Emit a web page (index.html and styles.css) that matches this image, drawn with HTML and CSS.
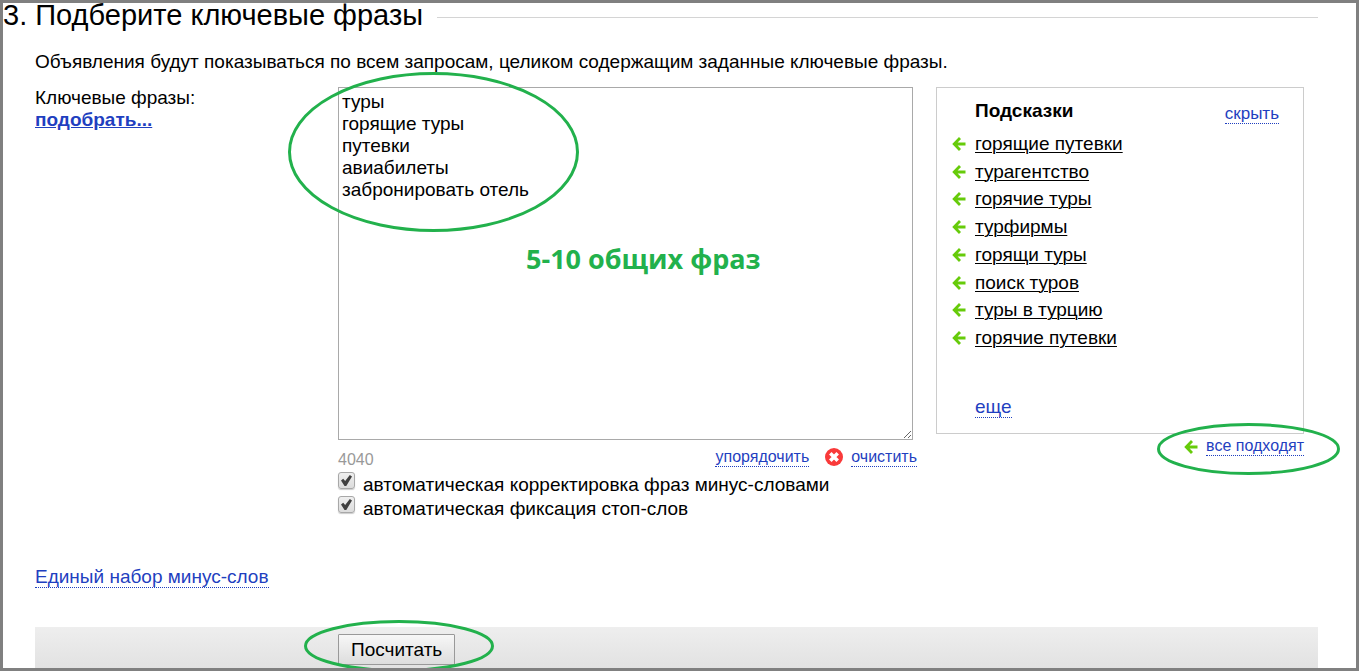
FILE: index.html
```
<!DOCTYPE html>
<html lang="ru">
<head>
<meta charset="utf-8">
<title>Подберите ключевые фразы</title>
<link rel="stylesheet" href="styles.css">
</head>
<body>
<svg class="symbols" aria-hidden="true">
  <symbol id="arrow" viewBox="0 0 14 14">
    <path d="M8 1 2.200 7 8 13M2.500 7H13.500" fill="none" stroke="#66cb0a" stroke-width="2.800"/>
  </symbol>
</svg>
<main class="page">
  <header class="heading">
    <h1 class="title">3. Подберите ключевые фразы</h1>
    <span class="rule"></span>
  </header>
  <div class="content">
    <p class="intro">Объявления будут показываться по всем запросам, целиком содержащим заданные ключевые фразы.</p>
    <div class="form">
      <div class="labels">
        <label for="phrases">Ключевые фразы:</label>
        <a class="pick" href="#">подобрать...</a>
      </div>
      <div class="editor">
        <div class="field">
          <textarea class="phrases" id="phrases" spellcheck="false">туры
горящие туры
путевки
авиабилеты
забронировать отель</textarea>
          <svg class="mark mark-phrases" viewBox="0 0 291 160" aria-hidden="true"><ellipse cx="145.500" cy="80" rx="144" ry="78.500"/></svg>
          <p class="note">5-10 общих фраз</p>
        </div>
        <div class="tools">
          <span class="counter">4040</span>
          <a class="action" href="#">упорядочить</a>
          <svg class="clear-icon" viewBox="0 0 18 18" aria-hidden="true"><circle cx="9" cy="9" r="9" fill="#f93a3a"/><path d="m5.300 5.300 7.400 7.400m0-7.400-7.400 7.400" stroke="#fff" stroke-width="3.600"/></svg>
          <a class="action" href="#">очистить</a>
        </div>
        <label class="option"><input class="check" type="checkbox" checked>автоматическая корректировка фраз минус-словами</label>
        <label class="option"><input class="check" type="checkbox" checked>автоматическая фиксация стоп-слов</label>
      </div>
      <aside class="side">
        <section class="hints">
          <div class="hints-head">
            <h2 class="hints-title">Подсказки</h2>
            <a class="action action-hide" href="#">скрыть</a>
          </div>
          <ul class="list">
            <li class="item"><svg class="arrow"><use href="#arrow"/></svg><a class="hint" href="#">горящие путевки</a></li>
            <li class="item"><svg class="arrow"><use href="#arrow"/></svg><a class="hint" href="#">турагентство</a></li>
            <li class="item"><svg class="arrow"><use href="#arrow"/></svg><a class="hint" href="#">горячие туры</a></li>
            <li class="item"><svg class="arrow"><use href="#arrow"/></svg><a class="hint" href="#">турфирмы</a></li>
            <li class="item"><svg class="arrow"><use href="#arrow"/></svg><a class="hint" href="#">горящи туры</a></li>
            <li class="item"><svg class="arrow"><use href="#arrow"/></svg><a class="hint" href="#">поиск туров</a></li>
            <li class="item"><svg class="arrow"><use href="#arrow"/></svg><a class="hint" href="#">туры в турцию</a></li>
            <li class="item"><svg class="arrow"><use href="#arrow"/></svg><a class="hint" href="#">горячие путевки</a></li>
          </ul>
          <a class="action action-large more" href="#">еще</a>
        </section>
        <div class="accept">
          <svg class="arrow"><use href="#arrow"/></svg>
          <a class="action" href="#">все подходят</a>
          <svg class="mark mark-accept" viewBox="0 0 183 52" aria-hidden="true"><ellipse cx="91.500" cy="26" rx="90" ry="24.500"/></svg>
        </div>
      </aside>
    </div>
    <a class="action action-large minus" href="#">Единый набор минус-слов</a>
    <footer class="bar">
      <div class="submit">
        <button class="button" type="button">Посчитать</button>
        <svg class="mark mark-submit" viewBox="0 0 190 52" aria-hidden="true"><ellipse cx="95" cy="26" rx="93.500" ry="24.500"/></svg>
      </div>
    </footer>
  </div>
</main>
</body>
</html>
```
FILE: styles.css
```
* { box-sizing: border-box; }
body {
  margin: 0;
  background: #fff;
  color: #000;
  font: 19px/22px "Liberation Sans", Arial, sans-serif;
}
h1, h2, p, ul { margin: 0; padding: 0; }
.symbols { position: absolute; width: 0; height: 0; }
.page {
  min-height: 100vh;
  border: 3px solid #808080;
  overflow: hidden;
}
.heading {
  display: flex;
  align-items: center;
  gap: 14px;
  height: 28px;
  padding-right: 38px;
}
.title {
  padding-bottom: 4px;
  font-size: 29px;
  font-weight: 400;
  line-height: 24px;
  white-space: nowrap;
}
.rule { flex: 1; height: 1px; background: #d4d4d4; }
.content { padding: 20px 38px 0 32px; }
.form {
  display: grid;
  grid-template-columns: 303px 1fr 368px;
  padding: 14px 14px 0 0;
}
.labels { display: flex; flex-direction: column; align-items: flex-start; }
.pick { font-weight: 700; color: #1f3fc0; }
.editor { margin-right: 23px; }
.field { position: relative; display: flex; }
.phrases {
  width: 100%;
  height: 353px;
  padding: 3px;
  border: 1px solid #a9a9a9;
  border-radius: 0;
  outline: 0;
  font: inherit;
  color: inherit;
}
.note {
  position: absolute;
  left: 188px;
  top: 154px;
  color: #22b14c;
  font: 700 27px/36px "Open Sans", "Noto Sans", sans-serif;
  white-space: nowrap;
}
.mark {
  position: absolute;
  fill: none;
  stroke: #22b14c;
  stroke-width: 3px;
  pointer-events: none;
}
.mark-phrases { left: -50px; top: -15px; width: 291px; height: 160px; }
.mark-accept { right: -36px; top: -11px; width: 183px; height: 52px; }
.mark-submit { left: -34px; top: -14px; width: 190px; height: 52px; }
.tools {
  display: flex;
  align-items: center;
  height: 33px;
  padding-top: 1px;
  margin-right: -4px;
}
.counter { flex: 1; padding-top: 5px; color: #999; font-size: 16px; }
.clear-icon { width: 18px; height: 18px; margin: 0 8px 0 16px; }
.action {
  border-bottom: 1px dotted #1f3fc0;
  color: #1f3fc0;
  font-size: 16px;
  line-height: 18px;
  text-decoration: none;
}
.action-large { font-size: 19px; line-height: 20px; }
.action-hide { font-size: 17px; }
.option { display: flex; align-items: center; height: 24px; }
.check {
  appearance: none;
  width: 17px;
  height: 17px;
  margin: 0 8px 9px 0;
  border: 1px solid #a8a8a8;
  border-radius: 3px;
  background: linear-gradient(#efefef, #dcdcdc);
  box-shadow: 0 1px 1px #ccc;
}
.check:checked::before {
  content: "";
  display: block;
  width: 11px;
  height: 11px;
  margin: 2px;
  background: #404040;
  clip-path: polygon(0 50%, 20% 35%, 38% 55%, 80% 0, 100% 14%, 48% 100%, 32% 100%);
}
.hints {
  height: 347px;
  padding: 12px 24px 15px 15px;
  border: 1px solid #ccc;
  display: flex;
  flex-direction: column;
}
.hints-head {
  display: flex;
  justify-content: space-between;
  align-items: flex-start;
  padding-left: 23px;
}
.hints-head .action { margin-top: 5px; }
.hints-title { font-size: 19px; line-height: 22px; }
.list {
  display: grid;
  grid-auto-rows: 1fr;
  height: 222px;
  margin-top: 6px;
  list-style: none;
}
.item { display: flex; align-items: center; gap: 9px; }
.arrow { width: 14px; height: 14px; }
.hint { color: #000; text-decoration-thickness: 1px; text-underline-offset: 2px; }
.more { align-self: flex-start; margin: auto 0 0 23px; }
.accept {
  position: relative;
  display: flex;
  align-items: center;
  justify-content: flex-end;
  gap: 8px;
  padding-top: 3px;
}
.minus { display: inline-block; margin-top: 46px; }
.bar {
  display: flex;
  height: 41px;
  margin-top: 39px;
  padding: 7px 0 0 303px;
  background: linear-gradient(#eee, #e2e2e2);
}
.submit { position: relative; }
.button {
  height: 31px;
  padding: 0 12px;
  border: 1px solid #999;
  border-radius: 1px;
  background: linear-gradient(#f7f7f7, #ddd);
  font: inherit;
  color: inherit;
}
```
